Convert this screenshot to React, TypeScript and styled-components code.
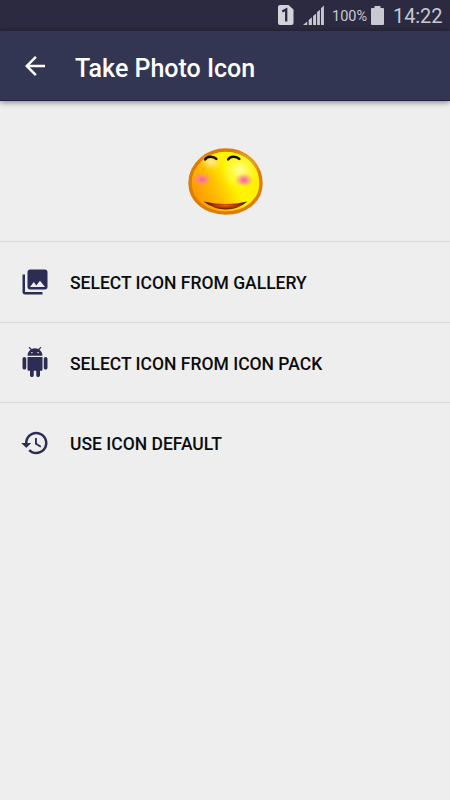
import React from 'react';
import styled, { createGlobalStyle } from 'styled-components';

const GlobalStyle = createGlobalStyle`
  * { box-sizing: border-box; }
  html, body { margin: 0; background: #eeeeee; }
  body { font-family: Roboto, "Liberation Sans", sans-serif; }
`;

const Screen = styled.div`
  display: flex;
  flex-direction: column;
  width: 450px;
  height: 800px;
  overflow: hidden;
  background: #eeeeee;
`;

const StatusBar = styled.div`
  display: flex;
  flex: none;
  align-items: center;
  justify-content: flex-end;
  height: 31px;
  padding-right: 8px;
  background: #2b2a40;
  color: #c9c9d1;
`;

const StatusGlyph = styled.svg<{ $gap: number }>`
  display: block;
  flex: none;
  margin-right: ${(p) => p.$gap}px;
`;

const Battery = styled.span`
  width: 35px;
  margin-right: 4px;
  padding-top: 2px;
  font-size: 14.5px;
  line-height: 30px;
  white-space: nowrap;
`;

const Clock = styled.span`
  width: 49px;
  padding-top: 1px;
  font-size: 20px;
  line-height: 30px;
  letter-spacing: -0.1px;
  white-space: nowrap;
`;

const Toolbar = styled.header`
  display: flex;
  flex: none;
  align-items: center;
  height: 70px;
  padding: 1px 20px 0;
  gap: 25px;
  background: #333652;
  border-bottom: 1px solid #21204b;
  box-shadow: 0 1px 6px rgba(0, 0, 0, 0.5);
  color: #ffffff;
`;

const IconSvg = styled.svg`
  display: block;
  flex: none;
  width: 30px;
  height: 30px;
  fill: currentColor;
`;

const Title = styled.h1`
  margin: 0;
  padding-top: 5px;
  font-size: 25px;
  font-weight: 500;
  line-height: 30px;
  white-space: nowrap;
`;

const Preview = styled.section`
  display: flex;
  flex: none;
  justify-content: center;
  height: 140px;
  padding: 46px 0 0 2px;
`;

const Options = styled.ul`
  margin: 0;
  padding: 0;
  list-style: none;
`;

const Option = styled.li`
  display: flex;
  align-items: center;
  gap: 20px;
  height: 80.5px;
  padding: 0 20px;
  border-top: 1px solid #d9d9d9;
  color: #2c2d54;
`;

const Label = styled.span`
  padding-top: 2.6px;
  color: #0c0c0c;
  font-size: 17.5px;
  font-weight: 500;
  line-height: 24px;
  white-space: nowrap;
`;

const paths = {
  back: 'M20 11H7.83l5.59-5.59L12 4l-8 8 8 8 1.41-1.41L7.83 13H20v-2z',
  gallery:
    'M22 16V4c0-1.1-.9-2-2-2H8c-1.1 0-2 .9-2 2v12c0 1.1.9 2 2 2h12c1.1 0 2-.9 2-2zm-11-4l2.03 2.71L16 11l4 5H8l3-4zM2 6v14c0 1.1.9 2 2 2h14v-2H4V6H2z',
  android:
    'M6 18c0 .55.45 1 1 1h1v3.5c0 .83.67 1.5 1.5 1.5s1.5-.67 1.5-1.5V19h2v3.5c0 .83.67 1.5 1.5 1.5s1.5-.67 1.5-1.5V19h1c.55 0 1-.45 1-1V8H6v10zM3.5 8C2.67 8 2 8.67 2 9.5v7c0 .83.67 1.5 1.5 1.5S5 17.33 5 16.5v-7C5 8.67 4.33 8 3.5 8zm17 0c-.83 0-1.5.67-1.5 1.5v7c0 .83.67 1.5 1.5 1.5s1.5-.67 1.5-1.5v-7c0-.83-.67-1.5-1.5-1.5zm-4.97-5.84l1.3-1.3c.2-.2.2-.51 0-.71-.2-.2-.51-.2-.71 0l-1.48 1.48C13.85 1.23 12.95 1 12 1c-.96 0-1.86.23-2.66.63L7.85.15c-.2-.2-.51-.2-.71 0-.2.2-.2.51 0 .71l1.31 1.31C6.97 3.26 6 5.01 6 7h12c0-1.99-.97-3.75-2.47-4.84zM10 5H9V4h1v1zm5 0h-1V4h1v1z',
  history:
    'M13 3c-4.97 0-9 4.03-9 9H1l3.89 3.89.07.14L9 12H6c0-3.87 3.13-7 7-7s7 3.13 7 7-3.13 7-7 7c-1.93 0-3.68-.79-4.94-2.06l-1.42 1.42C8.27 19.99 10.51 21 13 21c4.97 0 9-4.03 9-9s-4.03-9-9-9zm-1 5v5l4.28 2.54.72-1.21-3.5-2.08V8H12z',
};

type IconName = keyof typeof paths;

const Icon = ({ name }: { name: IconName }) => (
  <IconSvg viewBox="0 0 24 24" aria-hidden="true">
    <path d={paths[name]} />
  </IconSvg>
);

const SimIcon = () => (
  <StatusGlyph $gap={9} width="17" height="21" viewBox="0 0 17 21">
    <path d="M2.5 0h9L16.5 4.5v13.5a2 2 0 0 1-2 2H3a2 2 0 0 1-2-2v-16a2 2 0 0 1 2-2z" fill="#d3d3d9" />
    <path d="M5.3 6.6 9.2 4.4V16.5" fill="none" stroke="#2b2a40" strokeWidth="2.3" />
  </StatusGlyph>
);

const SignalIcon = () => (
  <StatusGlyph $gap={8} width="21" height="21" viewBox="0 0 21 21" fill="#c9c9d1">
    <path d="M0 20 4.2 16.5v3.5zM5.7 15.1l3.2-2.8v7.7H5.7zM10.1 11.1l3-2.7v11.6h-3zM14.1 7.1l2.8-2.4v15.3h-2.8zM18 3.2 20.9.5v19.5h-2.9z" />
  </StatusGlyph>
);

const BatteryIcon = () => (
  <StatusGlyph $gap={9} width="13" height="20" viewBox="0 0 13 20">
    <path d="M3.5 0h6v2H12a1 1 0 0 1 1 1v15a1 1 0 0 1-1 1H1a1 1 0 0 1-1-1V3a1 1 0 0 1 1-1h2.5z" fill="#c9c9d1" />
  </StatusGlyph>
);

const Face = () => (
  <svg width="76" height="69" viewBox="0 0 76 69" aria-hidden="true">
    <defs>
      <linearGradient id="skin" x1="0.08" y1="0.75" x2="0.85" y2="0.4">
        <stop offset="0" stopColor="#ff9800" />
        <stop offset="0.38" stopColor="#ffc100" />
        <stop offset="0.7" stopColor="#fff600" />
        <stop offset="1" stopColor="#fff000" />
      </linearGradient>
      <radialGradient id="shine">
        <stop offset="0" stopColor="#ffff9c" />
        <stop offset="1" stopColor="#ffff40" stopOpacity="0" />
      </radialGradient>
      <radialGradient id="gloss">
        <stop offset="0" stopColor="#fff7d8" stopOpacity="0.8" />
        <stop offset="1" stopColor="#ffdc50" stopOpacity="0" />
      </radialGradient>
      <radialGradient id="cheek">
        <stop offset="0" stopColor="#ff58b0" />
        <stop offset="0.35" stopColor="#ff74a8" stopOpacity="0.8" />
        <stop offset="1" stopColor="#ff9f76" stopOpacity="0" />
      </radialGradient>
      <radialGradient id="mouth">
        <stop offset="0" stopColor="#f46000" />
        <stop offset="0.5" stopColor="#b03800" />
        <stop offset="1" stopColor="#501800" />
      </radialGradient>
    </defs>
    <path
      d="M37.5 3C20 3 2 16.5 2 36 2 54 18 66 37.5 66S73 54 73 36.5C73 16 56 3 37.5 3z"
      fill="url(#skin)"
      stroke="#dc7d08"
      strokeWidth="3.4"
    />
    <ellipse cx="52" cy="23" rx="20" ry="20" fill="url(#shine)" />
    <ellipse cx="23" cy="15" rx="12" ry="9" fill="url(#gloss)" />
    <path d="M17.2 12.3C19 9.3 25 8.6 28.3 11.9M40.2 12.3C42 9.3 48 8.6 51.3 11.9" fill="none" stroke="#171000" strokeWidth="2.6" strokeLinecap="round" />
    <ellipse cx="14" cy="32.5" rx="10" ry="7" fill="url(#cheek)" />
    <ellipse cx="56" cy="33" rx="9.5" ry="7" fill="url(#cheek)" />
    <path d="M15.5 54.5Q38 59.5 59.5 54.5 50 62.5 38 62.5T15.5 54.5z" fill="url(#mouth)" />
  </svg>
);

const options: { icon: IconName; label: string }[] = [
  { icon: 'gallery', label: 'SELECT ICON FROM GALLERY' },
  { icon: 'android', label: 'SELECT ICON FROM ICON PACK' },
  { icon: 'history', label: 'USE ICON DEFAULT' },
];

export default function App() {
  return (
    <>
      <GlobalStyle />
      <Screen>
        <StatusBar>
          <SimIcon />
          <SignalIcon />
          <Battery>100%</Battery>
          <BatteryIcon />
          <Clock>14:22</Clock>
        </StatusBar>
        <Toolbar>
          <Icon name="back" />
          <Title>Take Photo Icon</Title>
        </Toolbar>
        <Preview>
          <Face />
        </Preview>
        <Options>
          {options.map((option) => (
            <Option key={option.icon}>
              <Icon name={option.icon} />
              <Label>{option.label}</Label>
            </Option>
          ))}
        </Options>
      </Screen>
    </>
  );
}
